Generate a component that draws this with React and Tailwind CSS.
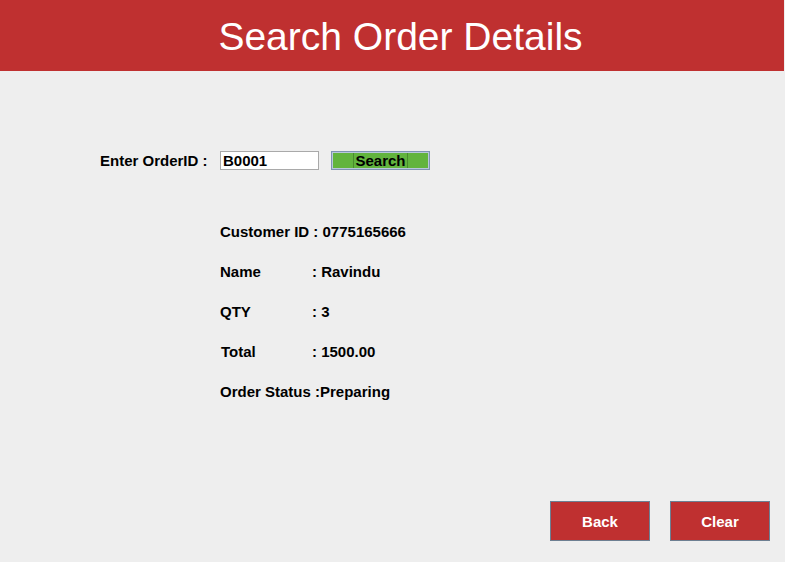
import React from "react";

export default function App() {
  const font = { fontFamily: '"Liberation Sans", Arial, sans-serif' };
  return (
    <div
      className="w-[785px] h-[562px] bg-[#eeeeee] flex flex-col overflow-hidden"
      style={font}
    >
      <div className="h-[71px] w-[784px] bg-[#bf3030] flex items-center justify-center pl-[17px] pt-[2px]">
        <h1 className="text-[39px] leading-none text-white font-normal">Search Order Details</h1>
      </div>

      <div className="flex items-center mt-[80px] pl-[100px] h-[19px]">
        <span className="w-[120px] text-[15px] font-bold text-black pt-[2px]">Enter OrderID :</span>
        <div className="w-[99px] h-[19px] bg-white border border-[#a9a9a9] flex items-center pl-[2px] pt-[1px] text-[15px] font-bold text-black">
          B0001
        </div>
        <div className="ml-[12px] w-[99px] h-[19px] border border-[#7f93b3] p-[1px] bg-[#b8c8dc]">
          <div className="w-full h-full bg-[#62b43e] flex items-center justify-center">
            <span className="text-[15px] leading-[15px] font-bold text-black px-[1px] border-x border-[#4a8a2e]">Search</span>
          </div>
        </div>
      </div>

      <div className="flex flex-col mt-[52px] pl-[220px] text-[15px] font-bold text-black">
        <div className="h-[20px] flex items-center">Customer ID : 0775165666</div>
        <div className="h-[20px] mt-[20px] flex items-center">
          <span className="w-[92px]">Name</span>
          <span>: Ravindu</span>
        </div>
        <div className="h-[20px] mt-[20px] flex items-center">
          <span className="w-[92px]">QTY</span>
          <span>: 3</span>
        </div>
        <div className="h-[20px] mt-[20px] flex items-center">
          <span className="w-[92px] pl-[1px]">Total</span>
          <span>: 1500.00</span>
        </div>
        <div className="h-[20px] mt-[20px] flex items-center">Order Status :Preparing</div>
      </div>

      <div className="mt-auto mb-[21px] flex justify-end gap-[20px] pr-[15px]">
        <button className="w-[100px] h-[40px] bg-[#bf3030] border border-[#6d7f92] text-white text-[15px] font-bold pt-[2px]">
          Back
        </button>
        <button className="w-[100px] h-[40px] bg-[#bf3030] border border-[#6d7f92] text-white text-[15px] font-bold pt-[2px]">
          Clear
        </button>
      </div>
    </div>
  );
}
